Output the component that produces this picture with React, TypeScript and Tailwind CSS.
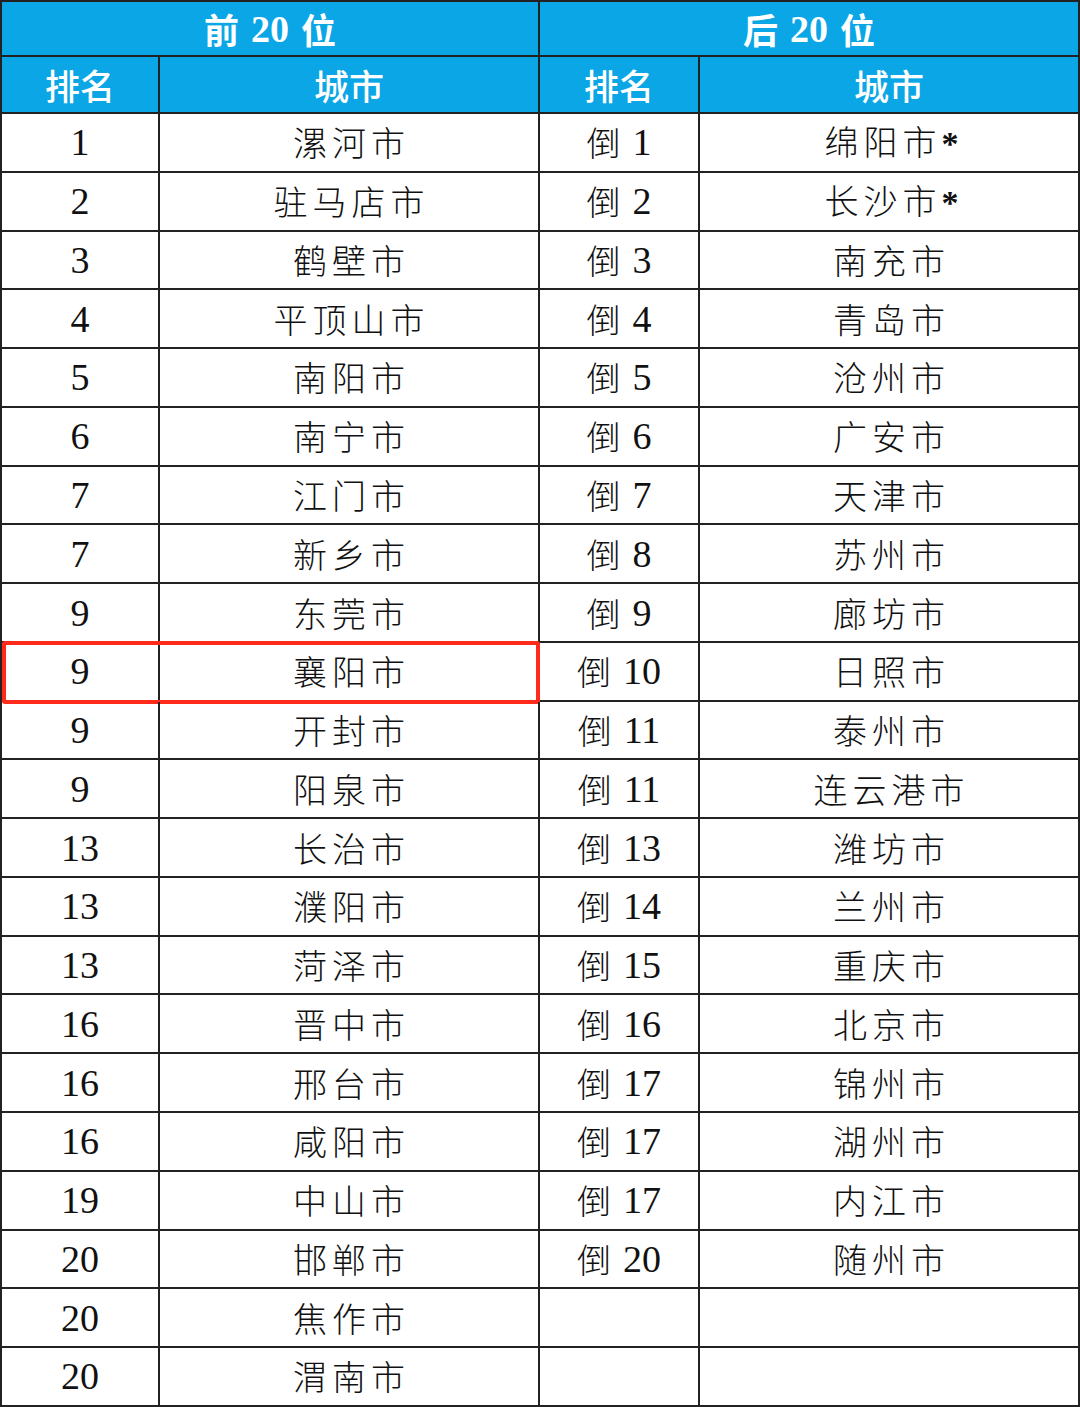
import React from "react";

const left: [string, string][] = [
  ["1", "漯河市"], ["2", "驻马店市"], ["3", "鹤壁市"], ["4", "平顶山市"], ["5", "南阳市"],
  ["6", "南宁市"], ["7", "江门市"], ["7", "新乡市"], ["9", "东莞市"], ["9", "襄阳市"],
  ["9", "开封市"], ["9", "阳泉市"], ["13", "长治市"], ["13", "濮阳市"], ["13", "菏泽市"],
  ["16", "晋中市"], ["16", "邢台市"], ["16", "咸阳市"], ["19", "中山市"], ["20", "邯郸市"],
  ["20", "焦作市"], ["20", "渭南市"],
];

const right: [string, string][] = [
  ["1", "绵阳市*"], ["2", "长沙市*"], ["3", "南充市"], ["4", "青岛市"], ["5", "沧州市"],
  ["6", "广安市"], ["7", "天津市"], ["8", "苏州市"], ["9", "廊坊市"], ["10", "日照市"],
  ["11", "泰州市"], ["11", "连云港市"], ["13", "潍坊市"], ["14", "兰州市"], ["15", "重庆市"],
  ["16", "北京市"], ["17", "锦州市"], ["17", "湖州市"], ["17", "内江市"], ["20", "随州市"],
  ["", ""], ["", ""],
];

function Num({ v }: { v: string }) {
  return <span className="font-['Liberation_Serif'] text-[38px] leading-none text-[#111]">{v}</span>;
}

function City({ v }: { v: string }) {
  const star = v.endsWith("*");
  const name = star ? v.slice(0, -1) : v;
  return (
    <span className="font-['Noto_Sans_CJK_SC'] font-light text-[34px] leading-none tracking-[5px] pl-[5px] text-[#111]">
      {name}
      {star && <span className="font-['Liberation_Serif'] font-bold tracking-normal">*</span>}
    </span>
  );
}

export default function App() {
  return (
    <div className="w-[1080px] h-[1407px] bg-white border-t-2 border-l-2 border-[#222] flex flex-col">
      {/* header row 1 */}
      <div className="grid grid-cols-[538px_540px] h-[55px] bg-[#0ba6e5] shrink-0">
        {["前", "后"].map((c) => (
          <div key={c} className="border-r-2 border-b-2 border-[#222] flex items-center justify-center text-white font-bold text-[35px] leading-none">
            <span className="font-['Noto_Sans_CJK_SC']">{c}</span>
            <span className="font-['Liberation_Serif'] mx-[12px] text-[38px]">20</span>
            <span className="font-['Noto_Sans_CJK_SC']">位</span>
          </div>
        ))}
      </div>
      {/* header row 2 */}
      <div className="grid grid-cols-[158px_380px_160px_380px] h-[57px] bg-[#0ba6e5] shrink-0">
        {["排名", "城市", "排名", "城市"].map((t, i) => (
          <div key={i} className="border-r-2 border-b-2 border-[#222] flex items-center justify-center">
            <span className="font-['Noto_Sans_CJK_SC'] font-medium text-white text-[35px] leading-none">{t}</span>
          </div>
        ))}
      </div>
      {/* data rows */}
      <div className="flex-1 flex flex-col">
        {left.map((l, i) => {
          const r = right[i];
          return (
            <div key={i} className="relative flex-1 grid grid-cols-[158px_380px_160px_380px]">
              <div className="border-r-2 border-b-2 border-[#222] flex items-center justify-center">
                <Num v={l[0]} />
              </div>
              <div className="border-r-2 border-b-2 border-[#222] flex items-center justify-center">
                <City v={l[1]} />
              </div>
              <div className="border-r-2 border-b-2 border-[#222] flex items-center justify-center">
                {r[0] && (
                  <span className="flex items-center">
                    <span className="font-['Noto_Sans_CJK_SC'] font-light text-[34px] leading-none text-[#111] mr-[12px]">倒</span>
                    <Num v={r[0]} />
                  </span>
                )}
              </div>
              <div className="border-r-2 border-b-2 border-[#222] flex items-center justify-center">
                {r[1] && <City v={r[1]} />}
              </div>
              {i === 9 && (
                <div className="absolute left-0 top-[-2px] w-[538px] h-[63px] border-[4px] border-[#ff2a1a] rounded-[3px] pointer-events-none" />
              )}
            </div>
          );
        })}
      </div>
    </div>
  );
}
